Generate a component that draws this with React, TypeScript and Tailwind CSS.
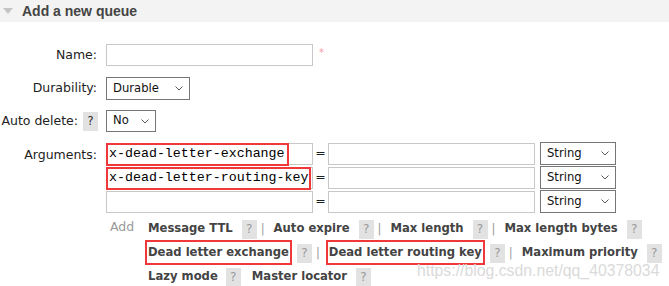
import React from "react";

const Chevron = () => (
  <svg width="8" height="5" viewBox="0 0 8 5" className="shrink-0">
    <path d="M0.5 0.5 L4 4 L7.5 0.5" fill="none" stroke="#555" strokeWidth="1" />
  </svg>
);

function FakeSelect({ value, width, height = "h-[23px]" }: { value: string; width: string; height?: string }) {
  return (
    <div
      className={`flex items-center justify-between border border-[#767676] bg-white pl-[6px] pr-[6px] text-[11.6px] text-[#111] ${width} ${height}`}
    >
      <span>{value}</span>
      <Chevron />
    </div>
  );
}

function Help({ dark }: { dark?: boolean }) {
  return (
    <span
      className={`inline-flex h-[19px] w-[15px] shrink-0 items-center justify-center bg-[#e2e2e2] text-[12px] font-normal ${
        dark ? "text-[#333]" : "text-[#999]"
      }`}
    >
      ?
    </span>
  );
}

const Sep = () => <span className="ml-[4px] mr-[9px] shrink-0 font-normal text-[#999]">|</span>;

function Opt({ label, boxed }: { label: string; boxed?: boolean }) {
  return (
    <span className="relative shrink-0 whitespace-nowrap">
      {label}
      {boxed && <span className="absolute -left-[3px] -right-[3px] -top-[4px] -bottom-[3px] border-2 border-[#f0383a]" />}
    </span>
  );
}

type ArgRow = { key: string; redWidth?: string };

const args: ArgRow[] = [
  { key: "x-dead-letter-exchange", redWidth: "w-[183px]" },
  { key: "x-dead-letter-routing-key", redWidth: "w-[205px]" },
  { key: "" },
];

export default function App() {
  return (
    <div className="relative h-[286px] w-[669px] overflow-hidden bg-white font-['DejaVu_Sans',sans-serif] text-[12.5px] text-[#222]">
      {/* section header */}
      <div className="flex h-[22px] items-center bg-[#f3f3f3]">
        <svg width="10" height="6" viewBox="0 0 10 6" className="ml-[3px]">
          <path d="M0 0 H10 L5 6 Z" fill="#c4c4c4" />
        </svg>
        <span className="ml-[9px] font-['Liberation_Sans',sans-serif] text-[14px] font-bold text-[#444]">
          Add a new queue
        </span>
      </div>

      <div className="pt-[22px]">
        {/* Name */}
        <div className="flex h-[22px] items-center">
          <div className="w-[98px] pr-[1px] text-right">Name:</div>
          <input
            readOnly
            className="ml-[8px] h-[22px] w-[207px] border border-[#c8c8c8] bg-white outline-none"
          />
          <span className="ml-[6px] -mt-[6px] text-[10px] text-[#f79aa8]">*</span>
        </div>

        {/* Durability */}
        <div className="mt-[11px] flex h-[23px] items-center">
          <div className="w-[98px] pr-[1px] text-right">Durability:</div>
          <div className="ml-[8px]">
            <FakeSelect value="Durable" width="w-[84px]" />
          </div>
        </div>

        {/* Auto delete */}
        <div className="mt-[10px] flex h-[22px] items-center">
          <div className="flex w-[98px] items-center justify-end gap-[5px]">
            <span>Auto delete:</span>
            <Help dark />
          </div>
          <div className="ml-[8px]">
            <FakeSelect value="No" width="w-[50px]" height="h-[22px]" />
          </div>
        </div>

        {/* Arguments */}
        <div className="mt-[10px] flex">
          <div className="w-[98px] pr-[1px] pt-[4px] text-right">Arguments:</div>
          <div className="ml-[8px] flex flex-col gap-[1px]">
            {args.map((a, i) => (
              <div key={i} className="flex h-[23px] items-center">
                <div className="relative">
                  <input
                    readOnly
                    defaultValue={a.key}
                    className="h-[22px] w-[207px] border border-[#c8c8c8] bg-white px-[2px] font-['Liberation_Mono',monospace] text-[13.3px] text-black outline-none"
                  />
                  {a.redWidth && (
                    <span className={`absolute left-0 top-0 h-[23px] border-2 border-[#f0383a] ${a.redWidth}`} />
                  )}
                </div>
                <span className="w-[15px] text-center">=</span>
                <input readOnly className="h-[22px] w-[207px] border border-[#c8c8c8] bg-white outline-none" />
                <div className="ml-[5px]">
                  <FakeSelect value="String" width="w-[76px]" />
                </div>
              </div>
            ))}
          </div>
        </div>

        {/* Add shortcuts */}
        <div className="ml-[110px] mt-[4px] flex w-[559px]">
          <div className="w-[38px] shrink-0 pt-[1px] text-[#999]">Add</div>
          <div className="flex shrink-0 flex-col whitespace-nowrap text-[11.6px] font-bold text-[#444]">
            <div className="flex h-[24px] items-center">
              <Opt label="Message TTL" />
              <span className="ml-[9px]"><Help /></span>
              <Sep />
              <Opt label="Auto expire" />
              <span className="ml-[9px]"><Help /></span>
              <Sep />
              <Opt label="Max length" />
              <span className="ml-[9px]"><Help /></span>
              <Sep />
              <Opt label="Max length bytes" />
              <span className="ml-[9px]"><Help /></span>
            </div>
            <div className="flex h-[24px] items-center">
              <Opt label="Dead letter exchange" boxed />
              <span className="ml-[8px]"><Help /></span>
              <Sep />
              <Opt label="Dead letter routing key" boxed />
              <span className="ml-[8px]"><Help /></span>
              <Sep />
              <Opt label="Maximum priority" />
              <span className="ml-[9px]"><Help /></span>
            </div>
            <div className="flex h-[24px] items-center">
              <Opt label="Lazy mode" />
              <span className="ml-[8px]"><Help /></span>
              <span className="ml-[11px]"><Opt label="Master locator" /></span>
              <span className="ml-[9px]"><Help /></span>
            </div>
          </div>
        </div>
      </div>

      {/* watermark */}
      <span className="pointer-events-none absolute left-[417px] top-[259px] font-['Liberation_Sans',sans-serif] text-[15.8px] text-[#dadada]">
        https://blog.csdn.net/qq_40378034
      </span>
    </div>
  );
}
